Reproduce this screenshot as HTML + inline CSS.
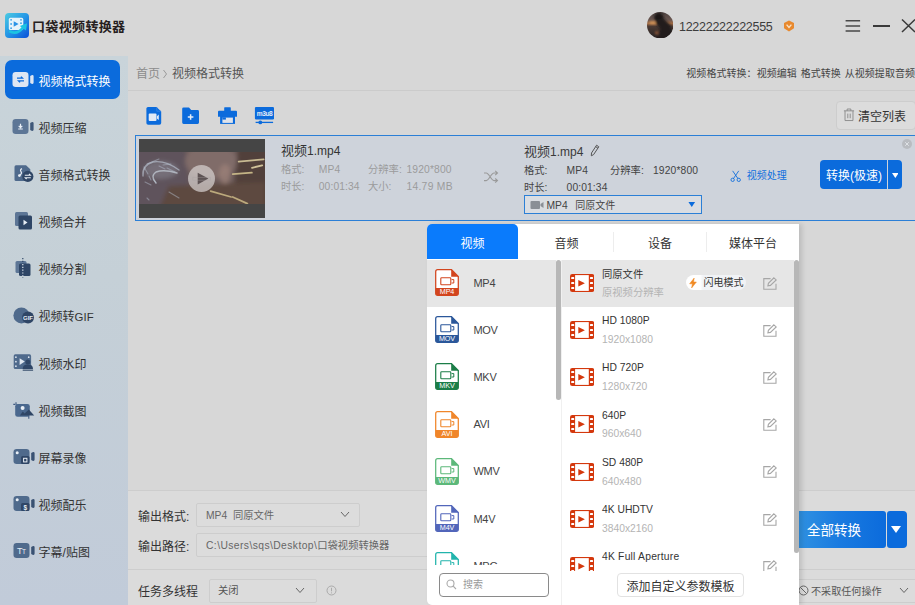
<!DOCTYPE html>
<html lang="zh-CN">
<head>
<meta charset="utf-8">
<title>口袋视频转换器</title>
<style>
*{box-sizing:border-box;margin:0;padding:0}
html,body{width:915px;height:605px;overflow:hidden}
body{position:relative;background:#d7d7d7;font-family:"Liberation Sans","Noto Sans CJK SC",sans-serif;font-size:12px;color:#333}
.abs{position:absolute}
.t{position:absolute;white-space:nowrap;line-height:1}
/* title bar */
#logo{left:4.5px;top:12.8px;width:24.6px;height:25.6px;border-radius:4px;background:linear-gradient(135deg,#4ccbe2 0%,#2496e6 50%,#0a4fd8 100%)}
#title{left:32px;top:19.5px;font-size:13px;font-weight:bold;color:#262020;letter-spacing:.35px}
/* sidebar */
#side{left:0;top:56px;width:128px;height:549px;background:linear-gradient(180deg,#c9d4da 0%,#c5d0d7 40%,#c1cbd9 100%)}
.nav{position:absolute;left:0;width:128px;height:47px}
.nav .ic{position:absolute;left:12px;top:13px;width:22px;height:20px}
.nav .lb{position:absolute;left:38.6px;top:19px;font-size:12px;line-height:1;color:#333;white-space:nowrap}
#act{left:5px;top:60px;width:115px;height:39px;border-radius:7px;background:#0b6bdc}
/* footer */
.box{position:absolute;border:1px solid #cdcdcd;background:#dcdcdc;border-radius:2px}
.hl{position:absolute;height:1px;background:#cdcdcd}
/*POP*/
#pop{position:absolute;left:427px;top:224px;width:372px;height:381px;background:#fff;border-radius:5px 0 0 5px;box-shadow:3px 0 5px rgba(0,0,0,.13)}
.tab{position:absolute;top:0;height:35px;line-height:41px;text-align:center;font-size:12px;color:#333}
.tab.on{background:#0a7bfc;color:#fff;border-radius:5px 5px 0 0}
.sep{position:absolute;top:8px;width:1px;height:20px;background:#ededed}
#ll{position:absolute;left:0;top:36px;width:129px;height:305px;overflow:hidden}
#rl{position:absolute;left:135px;top:36px;width:232px;height:311px;overflow:hidden}
.li,.ri{position:absolute;left:0;width:100%;height:47.2px}
.sel{background:#e6e6e6}
.fi{position:absolute;left:8px;top:9px}
.ln{position:absolute;left:46.5px;top:17.5px;font-size:11px;letter-spacing:-.3px;line-height:1;color:#444}
.fm{position:absolute;left:7.9px;top:13.9px}
.r1{position:absolute;left:40px;top:9px;font-size:10.3px;line-height:1;color:#333;white-space:nowrap}
.r2{position:absolute;left:40px;top:27.8px;font-size:10.3px;line-height:1;color:#b4b4b4;white-space:nowrap}
.ed{position:absolute;left:201px;top:16.6px}
.pill{position:absolute;left:124px;top:15px;width:60px;height:15px;border-radius:8px;background:linear-gradient(90deg,#fff 0,#fff 14px,#f1f3f6 17px)}
.pill span{position:absolute;left:17.5px;top:2.5px;font-size:10px;line-height:1;color:#333;white-space:nowrap}
.sb{position:absolute;border-radius:2.5px;background:#b7b7b7}
/*/POP*/</style>
</head>
<body>

<!-- TITLE BAR -->
<div id="logo" class="abs">
<svg width="25" height="26" viewBox="0 0 25 26" style="position:absolute;left:0;top:0"><rect x="3.8" y="4.8" width="14.5" height="12.2" rx="1.6" fill="#e6f3fa"/><g fill="#3aa2e6"><circle cx="6.1" cy="6.8" r=".9"/><circle cx="6.1" cy="11" r=".9"/><circle cx="6.1" cy="15.2" r=".9"/><circle cx="16" cy="6.8" r=".9"/><circle cx="16" cy="10.2" r=".9"/></g><path d="M8.7 8.2L13.6 11L8.7 13.8Z" fill="#2b93e6"/><path d="M4.3 18.2Q12 22.5 18 14.5" stroke="#1cc4e2" stroke-width="2.6" fill="none"/><path d="M14.8 12.9L22 10.2L21 17.6Z" fill="#1cc4e2"/></svg>
</div>
<div id="title" class="t">口袋视频转换器</div>

<svg class="abs" id="avatar" style="left:647px;top:12px" width="26.4" height="26.4" viewBox="0 0 26 26"><defs><clipPath id="av"><circle cx="13" cy="13" r="13"/></clipPath><linearGradient id="avg" x1="0" y1="0" x2="0" y2="1"><stop offset="0" stop-color="#4a403f"/><stop offset=".3" stop-color="#6a5650"/><stop offset=".43" stop-color="#a06a44"/><stop offset=".55" stop-color="#4a3a34"/><stop offset="1" stop-color="#262121"/></linearGradient><filter id="avb"><feGaussianBlur stdDeviation=".8"/></filter></defs><g clip-path="url(#av)"><rect width="26" height="26" fill="url(#avg)"/><g filter="url(#avb)"><ellipse cx="6" cy="10.6" rx="4" ry="1.3" fill="#d89a5a"/><circle cx="9.5" cy="20.5" r="1.6" fill="#9a5c38"/><circle cx="11.6" cy="5.4" r="4.6" fill="#1c1919"/><path d="M8 8L16 6L23 13L27 27H11L13 16L9 12Z" fill="#211d1d"/></g></g></svg>
<div class="t" style="left:679px;top:20.5px;font-size:12.5px;color:#3c3c3c;letter-spacing:-.27px">12222222222555</div>
<svg class="abs" style="left:783px;top:20px" width="12" height="12" viewBox="0 0 12 12"><path d="M6 .5 L11 3 V8.2 L6 11.5 L1 8.2 V3Z" fill="#e8892e"/><path d="M3.6 4.6 L6 7.4 L8.4 4.6" stroke="#f9e3c8" stroke-width="1.4" fill="none"/></svg>
<svg class="abs" style="left:844px;top:18px" width="17" height="15" viewBox="0 0 17 15"><path d="M1.6 2.8H16.1M1.6 8H16.1M1.6 13.1H16.1" stroke="#484848" stroke-width="1.5"/></svg>
<div class="abs" style="left:873px;top:25px;width:17px;height:1.7px;background:#3a3a3a"></div>
<svg class="abs" style="left:901px;top:18px" width="14" height="15" viewBox="0 0 14 15"><path d="M1 1.5 L14 14 M14 1.5 L1 14" stroke="#3a3a3a" stroke-width="1.5"/></svg>

<!-- SIDEBAR -->
<div id="side" class="abs"></div>
<div id="act" class="abs"></div>
<div id="navs">
<div class="nav" style="top:57px"><svg class="ic" style="left:12.1px;overflow:visible" viewBox="0 0 22 20"><g><rect x="0.5" y="2" width="16" height="15" rx="3.2" fill="#dde6f3"/><path d="M18.2 5.9 Q21.6 3.9 21.6 6.4 V12.6 Q21.6 15.1 18.2 13.1Z" fill="#dde6f3"/><path d="M5 8.2H10.5L9 6.6M12 10.8H6.5L8 12.4" stroke="#0b6bdc" stroke-width="1.3" fill="none"/></g></svg><span class="lb" style="color:#fff">视频格式转换</span></div>
<div class="nav" style="top:104px"><svg class="ic" style="left:12.1px;overflow:visible" viewBox="0 0 22 20"><g><rect x="0.5" y="2" width="16" height="15" rx="3.2" fill="#5d7696"/><path d="M18.2 5.9 Q21.6 3.9 21.6 6.4 V12.6 Q21.6 15.1 18.2 13.1Z" fill="#40597a"/><path d="M8.5 6.8V10M6.7 8.8L8.5 10.6L10.3 8.8M6.2 12H10.8" stroke="#e8eef5" stroke-width="1.2" fill="none"/></g></svg><span class="lb" style="color:#333">视频压缩</span></div>
<div class="nav" style="top:151px"><svg class="ic" style="left:12.5px;overflow:visible" viewBox="0 0 22 20"><g transform="translate(1,1)"><path d="M2 .3H12L16.3 4.2V16H2Q.5 16 .5 14.5V1.8Q.5 .3 2 .3Z" fill="#4f6a8c"/><path d="M8 3.6 Q5.6 4.6 7 6.6 T5.6 10" stroke="#e8eef5" stroke-width="1.2" fill="none"/><circle cx="5.4" cy="10.6" r="1.4" fill="#e8eef5"/><circle cx="13.8" cy="11.4" r="5.6" fill="#2f4666"/><path d="M10.8 10.2H16.3L15 8.9M16.8 12.7H11.3L12.6 14" stroke="#e8eef5" stroke-width="1.1" fill="none"/></g></svg><span class="lb" style="color:#333">音频格式转换</span></div>
<div class="nav" style="top:198px"><svg class="ic" style="left:12.5px;overflow:visible" viewBox="0 0 22 20"><g><rect x="2" y="1" width="13" height="14" rx="1.5" fill="#5d7696"/><rect x="5.5" y="4.5" width="13.5" height="14" rx="1.5" fill="#2f4666"/><path d="M10.5 8.8L14.5 11.5L10.5 14.2Z" fill="#e8eef5"/></g></svg><span class="lb" style="color:#333">视频合并</span></div>
<div class="nav" style="top:245px"><svg class="ic" style="left:12.5px;overflow:visible" viewBox="0 0 22 20"><g><rect x="2.5" y="3" width="11" height="12" rx="1.5" fill="#5d7696"/><rect x="6" y="5.5" width="11.5" height="12.5" rx="1.5" fill="#2f4666"/><path d="M9.8 0V20" stroke="#2f4666" stroke-width="1.2" stroke-dasharray="1.2 1.6"/><path d="M9.8 6V18" stroke="#dfe7f0" stroke-width="1.2" stroke-dasharray="1.2 1.6"/></g></svg><span class="lb" style="color:#333">视频分割</span></div>
<div class="nav" style="top:292px"><svg class="ic" style="left:12.5px;overflow:visible" viewBox="0 0 22 20"><g><circle cx="8.4" cy="10.4" r="8" fill="#4f6a8c"/><circle cx="15" cy="12.5" r="6" fill="#2f4666"/><text x="15" y="14.7" font-size="6" font-weight="bold" fill="#e8eef5" text-anchor="middle" font-family="Liberation Sans,sans-serif">GIF</text></g></svg><span class="lb" style="color:#333">视频转<span style="font-size:11.4px">GIF</span></span></div>
<div class="nav" style="top:340px"><svg class="ic" style="left:12.5px;overflow:visible" viewBox="0 0 22 20"><g><rect x=".7" y="1.3" width="17.4" height="14.8" rx="1.6" fill="#4f6a8c"/><g fill="#dfe7f0"><circle cx="2.9" cy="4.2" r=".85"/><circle cx="2.9" cy="8.7" r=".85"/><circle cx="2.9" cy="13.2" r=".85"/><circle cx="15.7" cy="4.2" r=".85"/></g><path d="M6.6 5.2L11.8 8.6L6.6 12Z" fill="#dfe7f0"/><circle cx="14.8" cy="8.9" r="2.5" fill="#2f4666"/><path d="M9.7 15.9Q9.7 11.6 14.8 11.6Q20 11.6 20 15.9Z" fill="#2f4666"/><rect x="9.7" y="16.6" width="10.4" height="1.1" fill="#2f4666"/></g></svg><span class="lb" style="color:#333">视频水印</span></div>
<div class="nav" style="top:387px"><svg class="ic" style="left:12.5px;overflow:visible" viewBox="0 0 22 20"><g><path d="M3 2.2V5M.3 4.4H2" stroke="#3f5a80" stroke-width="1.1" fill="none"/><rect x="2.2" y="3.9" width="14.6" height="12.9" rx="2.4" fill="#4a688e"/><path d="M15.8 16V18.8" stroke="#3f5a80" stroke-width="1.1"/><circle cx="9.6" cy="8" r="2" fill="#e8eef5"/><path d="M6.9 15.6L9.8 11.6L11.6 13.6L15.8 9.4L21.2 15.6Z" fill="#2f4666"/></g></svg><span class="lb" style="color:#333">视频截图</span></div>
<div class="nav" style="top:434px"><svg class="ic" style="left:13px;overflow:visible" viewBox="0 0 22 20"><g><rect x="0.5" y="2" width="16" height="15" rx="3.2" fill="#4f6a8c"/><path d="M18.2 5.9 Q21.6 3.9 21.6 6.4 V12.6 Q21.6 15.1 18.2 13.1Z" fill="#3a5273"/><circle cx="4.2" cy="5.8" r="1.5" fill="#e8eef5"/><rect x="8" y="9" width="8.5" height="8" rx="1.5" fill="#2f4666"/><rect x="10.6" y="11.3" width="3.3" height="3.6" fill="none" stroke="#e8eef5" stroke-width="1"/></g></svg><span class="lb" style="color:#333">屏幕录像</span></div>
<div class="nav" style="top:481px"><svg class="ic" style="left:13px;overflow:visible" viewBox="0 0 22 20"><g><rect x="0.5" y="2" width="16" height="15" rx="3.2" fill="#4f6a8c"/><path d="M18.2 5.9 Q21.6 3.9 21.6 6.4 V12.6 Q21.6 15.1 18.2 13.1Z" fill="#3a5273"/><circle cx="4.2" cy="5.8" r="1.5" fill="#e8eef5"/><rect x="8" y="9" width="8.5" height="8" rx="1.5" fill="#2f4666"/><text x="12.3" y="15.6" font-size="6.5" font-weight="bold" fill="#e8eef5" text-anchor="middle" font-family="Liberation Sans,sans-serif">$</text></g></svg><span class="lb" style="color:#333">视频配乐</span></div>
<div class="nav" style="top:528px"><svg class="ic" style="left:13px;overflow:visible" viewBox="0 0 22 20"><g><rect x="0.5" y="2" width="16" height="15" rx="3.2" fill="#4f6a8c"/><path d="M18.2 5.9 Q21.6 3.9 21.6 6.4 V12.6 Q21.6 15.1 18.2 13.1Z" fill="#3a5273"/><text x="8.3" y="13" font-size="9" fill="#e8eef5" text-anchor="middle" font-family="Liberation Sans,sans-serif" letter-spacing="-.5">T<tspan font-size="6.5">T</tspan></text></g></svg><span class="lb" style="color:#333">字幕/贴图</span></div>
</div><!--/navs-->

<!-- MAIN -->
<div id="main">
<!-- breadcrumb -->
<div class="t" style="left:136px;top:68px;font-size:12px;color:#8c8c8c">首页</div>
<svg class="abs" style="left:162px;top:69px" width="6" height="10" viewBox="0 0 6 10"><path d="M1.5 1L4.5 5L1.5 9" stroke="#9a9a9a" stroke-width="1" fill="none"/></svg>
<div class="t" style="left:172px;top:68px;font-size:12px;color:#555">视频格式转换</div>
<div class="t" style="left:686.3px;top:69px;font-size:10px;color:#444;word-spacing:1px;letter-spacing:.05px">视频格式转换：视频编辑 格式转换 从视频提取音频</div>
<div class="hl" style="left:128px;top:90px;width:787px;background:#cbcbcb"></div>

<!-- toolbar icons -->
<svg class="abs" style="left:145px;top:106px" width="18" height="20" viewBox="0 0 18 20"><path d="M3 1H11.5L16.2 5.5V17Q16.2 18.8 14.4 18.8H3.2Q1.4 18.8 1.4 17V2.6Q1.4 1 3 1Z" fill="#0b6bdc"/><path d="M11.8 1.2V5.2H16" stroke="#3f8ae6" stroke-width=".7" fill="none"/><rect x="3.7" y="7.6" width="7.8" height="7.4" rx="1" fill="#e1e9f5"/><path d="M11.9 10.2L13.8 8.6V14L11.9 12.4Z" fill="#e1e9f5"/></svg>
<svg class="abs" style="left:181px;top:106px" width="19" height="20" viewBox="0 0 19 20"><path d="M1.2 2.8Q1.2 1.4 2.6 1.4H8L10.2 4H16.6Q18 4 18 5.4V16.6Q18 18 16.6 18H2.6Q1.2 18 1.2 16.6Z" fill="#0b6bdc"/><path d="M9.6 8.2V13.8M6.8 11H12.4" stroke="#e4ecf7" stroke-width="1.5"/></svg>
<svg class="abs" style="left:217px;top:106px" width="21" height="20" viewBox="0 0 21 20"><rect x="7.2" y="1.2" width="6.6" height="4.5" rx=".6" fill="#0b6bdc"/><path d="M2 4.7H19Q20 4.7 20 5.7V10.8H1V5.7Q1 4.7 2 4.7Z" fill="#0b6bdc"/><path d="M3.1 10H18V17.9H3.1Z" fill="#0b6bdc"/><rect x="5.4" y="11.6" width="10.5" height="5.3" fill="#dfe3ea"/><rect x="5.4" y="11.4" width="3.5" height="2.2" fill="#0b6bdc"/></svg>
<svg class="abs" style="left:254px;top:106px" width="21" height="20" viewBox="0 0 21 20"><rect x=".9" y=".9" width="19.1" height="12.6" rx="1.2" fill="#0b6bdc"/><text x="10.5" y="9.6" font-size="6.6" font-weight="bold" fill="#e4ecf7" text-anchor="middle" font-family="Liberation Sans,sans-serif" letter-spacing="-.4">m3u8</text><path d="M1.6 16.4H19.1" stroke="#0b6bdc" stroke-width="1.3"/><circle cx="6.3" cy="16.4" r="1.9" fill="#0b6bdc"/></svg>

<!-- clear list button -->
<div class="abs" style="left:836px;top:101px;width:80px;height:29px;border:1px solid #cdcdcd;border-radius:4px;background:#dcdcdc"></div>
<svg class="abs" style="left:842.5px;top:108px" width="12" height="14" viewBox="0 0 13 15"><path d="M1 3H12M4.5 3V1H8.5V3M2.2 3V13.5H10.8V3M5.2 6V11M7.8 6V11" stroke="#8a8a8a" stroke-width="1" fill="none"/></svg>
<div class="t" style="left:858px;top:111px;font-size:12px;color:#333">清空列表</div>

<!-- list item -->
<div class="abs" style="left:135px;top:135px;width:782px;height:86px;border:1px solid #2b7fd6;background:#ced3db"></div>
<div class="abs" id="thumb" style="left:138.5px;top:139px;width:126px;height:78.5px;background:#454545;overflow:hidden">
<svg class="abs" style="left:0;top:13px" width="126" height="52" viewBox="0 0 126 52">
<defs><filter id="b1" x="-10%" y="-10%" width="120%" height="120%"><feGaussianBlur stdDeviation="2.2"/></filter><filter id="b2" x="-10%" y="-30%" width="120%" height="160%"><feGaussianBlur stdDeviation=".55"/></filter><clipPath id="cp"><rect width="126" height="52"/></clipPath></defs>
<g clip-path="url(#cp)">
<rect width="126" height="52" fill="#6a5958"/>
<g filter="url(#b1)">
<path d="M-5 -5H46L50 30L40 57H-5Z" fill="#5f535b"/>
<ellipse cx="72" cy="9" rx="26" ry="18" fill="#806c69"/>
<path d="M99 -5H131V57H80L96 30Z" fill="#51413a"/>
<path d="M30 34L126 30V57H20Z" fill="#5d493f"/>
<ellipse cx="22" cy="18" rx="17" ry="9" fill="#7b7580" opacity=".8"/>
<ellipse cx="86" cy="22" rx="6" ry="10" fill="#9a8078" opacity=".8"/>
</g>
<g filter="url(#b2)" fill="none" stroke-linecap="round">
<path d="M4 24Q3 13 14 10Q26 8 40 18" stroke="#c9d6e4" stroke-width="1.4" opacity=".55"/>
<path d="M17 31Q11 24 17 20Q25 17 38 21" stroke="#d4dee8" stroke-width="1.4" opacity=".62"/>
<path d="M8 12L20 7M6 30L12 33M24 13L32 12M14 27L17 31M5 15L9 22M20 14L26 17M28 16L36 20M10 24L12 28M30 40L40 46M8 46L10 48" stroke="#b9c4d2" stroke-width="1.1" opacity=".45"/>
<path d="M99.6 9.6L124.7 7.4" stroke="#c8ba92" stroke-width="1.6"/>
<path d="M113 15.8L123.2 13.3" stroke="#d0c29a" stroke-width="1.8"/>
<path d="M93.7 22.1L112.9 20.7" stroke="#c4b486" stroke-width="1.7"/>
<path d="M71.6 39.1L92.2 45" stroke="#bba97c" stroke-width="1.7"/>
<path d="M93.7 45L108.4 51.6" stroke="#bba97c" stroke-width="1.7"/>
</g></g></svg>
 <div class="abs" style="left:49.3px;top:25.6px;width:27.2px;height:27.2px;border-radius:50%;background:rgba(214,208,207,.72)"></div>
 <svg class="abs" style="left:49.3px;top:25.6px" width="27.2" height="27.2" viewBox="0 0 28 28"><path d="M10 8L21 14L10 20Z" fill="#5e5354"/><rect x="5" y="12.6" width="18" height="3" fill="none" stroke="#a9a2a2" stroke-width=".5" opacity=".7"/></svg>
</div>
<div class="t" style="left:281px;top:144px;font-size:13px;color:#333">视频<span style="font-size:12px">1.mp4</span></div>
<div class="t" style="left:281px;top:165px;font-size:10.3px;color:#9b9b9b">格式:</div>
<div class="t" style="left:318.8px;top:165px;font-size:10.3px;color:#9b9b9b;letter-spacing:.1px">MP4</div>
<div class="t" style="left:368px;top:165px;font-size:10.3px;color:#9b9b9b">分辨率:</div>
<div class="t" style="left:406.4px;top:165px;font-size:10.3px;color:#9b9b9b;letter-spacing:.15px">1920*800</div>
<div class="t" style="left:281px;top:182px;font-size:10.3px;color:#9b9b9b">时长:</div>
<div class="t" style="left:318.8px;top:182px;font-size:10.3px;color:#9b9b9b;letter-spacing:.1px">00:01:34</div>
<div class="t" style="left:368px;top:182px;font-size:10.3px;color:#9b9b9b">大小:</div>
<div class="t" style="left:406.4px;top:182px;font-size:10.3px;color:#9b9b9b;letter-spacing:.3px">14.79 MB</div>
<svg class="abs" style="left:483px;top:169.5px" width="16" height="14" viewBox="0 0 16 14"><path d="M1 3H3.2C6.2 3 8 10.6 11 10.6H14M1 10.6H3.2C6.2 10.6 8 3 11 3H14M12.2 .9L14.5 3L12.2 5.1M12.2 8.5L14.5 10.6L12.2 12.7" stroke="#9a9a9a" stroke-width="1.1" fill="none"/></svg>

<div class="t" style="left:524px;top:144.7px;font-size:13px;color:#3a3a3a">视频<span style="font-size:12px">1.mp4</span></div>
<svg class="abs" style="left:590px;top:143.5px" width="10" height="13" viewBox="0 0 10 13"><path d="M6.6 1.2L8.8 2.8L3.6 10.6L1.3 11.8L1.5 9Z M5.7 2.6L7.9 4.2" stroke="#555" stroke-width="1" fill="none"/></svg>
<div class="t" style="left:524px;top:165.5px;font-size:10.3px;color:#444">格式:</div>
<div class="t" style="left:566.6px;top:165.5px;font-size:10.3px;color:#444;letter-spacing:.1px">MP4</div>
<div class="t" style="left:610px;top:165.5px;font-size:10.3px;color:#444">分辨率:</div>
<div class="t" style="left:652.9px;top:165.5px;font-size:10.3px;color:#444;letter-spacing:.15px">1920*800</div>
<div class="t" style="left:524px;top:182.5px;font-size:10.3px;color:#444">时长:</div>
<div class="t" style="left:566.6px;top:182.5px;font-size:10.3px;color:#444;letter-spacing:.1px">00:01:34</div>
<div class="abs" style="left:524px;top:195px;width:177.5px;height:19px;border:1px solid #2b7fd6;background:#dadde2"></div>
<svg class="abs" style="left:529.5px;top:199.5px" width="14" height="10" viewBox="0 0 14 10"><rect x="0.5" y="1" width="9.5" height="8" rx="1" fill="#8a8f96"/><path d="M10.5 4L13.5 2V8L10.5 6Z" fill="#8a8f96"/></svg>
<div class="t" style="left:546.5px;top:200.7px;font-size:10.3px;color:#444">MP4</div>
<div class="t" style="left:575.3px;top:200.7px;font-size:10px;color:#444">同原文件</div>
<svg class="abs" style="left:688px;top:202px" width="7.5" height="5" viewBox="0 0 8 6"><path d="M0 0H8L4 6Z" fill="#0b6bdc"/></svg>

<svg class="abs" style="left:730px;top:169.6px" width="11.4" height="12.2" viewBox="0 0 13 14"><path d="M3 1L9.2 10M10 1L3.8 10" stroke="#0b6bdc" stroke-width="1" fill="none"/><circle cx="3" cy="11.3" r="1.9" stroke="#0b6bdc" stroke-width="1" fill="none"/><circle cx="10" cy="11.3" r="1.9" stroke="#0b6bdc" stroke-width="1" fill="none"/></svg>
<div class="t" style="left:746.8px;top:171.2px;font-size:10px;color:#0f6fde">视频处理</div>
<div class="abs" style="left:820px;top:160px;width:67px;height:29px;border-radius:4px 0 0 4px;background:#0b6bdc"></div>
<div class="t" style="left:826px;top:170px;font-size:12px;color:#fff">转换(极速)</div>
<div class="abs" style="left:888px;top:160px;width:14px;height:29px;border-radius:0 4px 4px 0;background:#0b6bdc"></div>
<svg class="abs" style="left:891.6px;top:172.5px" width="6.6" height="5" viewBox="0 0 8 6"><path d="M0 0H8L4 6Z" fill="#fff"/></svg>
<div class="abs" style="left:902px;top:139px;width:10px;height:10px;border-radius:50%;background:#b9bcc1"></div>
<svg class="abs" style="left:902px;top:139px" width="10" height="10" viewBox="0 0 10 10"><path d="M3.2 3.2L6.8 6.8M6.8 3.2L3.2 6.8" stroke="#dfe2e6" stroke-width="1"/></svg>

<!-- footer -->
<div class="abs" style="left:128px;top:491px;width:787px;height:114px;background:#dbdbdb"></div>
<div class="hl" style="left:128px;top:490px;width:787px"></div>
<div class="t" style="left:138px;top:510.7px;font-size:12px;color:#333">输出格式:</div>
<div class="box" style="left:196px;top:503px;width:164px;height:24px"></div>
<div class="t" style="left:206px;top:511px;font-size:10.3px;color:#666">MP4&nbsp;&nbsp;同原文件</div>
<svg class="abs" style="left:340px;top:511px" width="10" height="7" viewBox="0 0 10 7"><path d="M1 1L5 5.5L9 1" stroke="#666" stroke-width="1" fill="none"/></svg>
<div class="t" style="left:138px;top:540.7px;font-size:12px;color:#333">输出路径:</div>
<div class="box" style="left:196px;top:533px;width:400px;height:24px"></div>
<div class="t" style="left:206px;top:541px;font-size:10.3px;color:#666"><span style="letter-spacing:.42px">C:\Users\sqs\Desktop\</span>口袋视频转换器</div>
<div class="hl" style="left:128px;top:569px;width:787px"></div>
<div class="t" style="left:138px;top:585.7px;font-size:12px;color:#333">任务多线程</div>
<div class="box" style="left:209px;top:579px;width:108px;height:24px"></div>
<div class="t" style="left:218px;top:586px;font-size:10.3px;color:#555">关闭</div>
<svg class="abs" style="left:295px;top:587px" width="10" height="7" viewBox="0 0 10 7"><path d="M1 1L5 5.5L9 1" stroke="#666" stroke-width="1" fill="none"/></svg>
<svg class="abs" style="left:326px;top:585px" width="11" height="11" viewBox="0 0 11 11"><circle cx="5.5" cy="5.5" r="4.5" stroke="#aaa" stroke-width="1" fill="none"/><path d="M5.5 2.8V6.3M5.5 7.4V8.4" stroke="#aaa" stroke-width="1"/></svg>

<div class="abs" style="left:790px;top:511px;width:96px;height:37px;border-radius:4px 3px 3px 4px;background:linear-gradient(90deg,#3496e2 0%,#1a7be0 50%,#0b6bdc 100%)"></div>
<div class="t" style="left:807px;top:523.5px;font-size:13.5px;color:#fff">全部转换</div>
<div class="abs" style="left:887px;top:511px;width:20px;height:37px;border-radius:3px 4px 4px 3px;background:#0b6bdc"></div>
<svg class="abs" style="left:891px;top:526px" width="10" height="7" viewBox="0 0 10 7"><path d="M0 0H10L5 7Z" fill="#fff"/></svg>
<div class="box" style="left:780px;top:579px;width:140px;height:24px"></div>
<svg class="abs" style="left:798px;top:585px" width="11" height="11" viewBox="0 0 11 11"><circle cx="5.5" cy="5.5" r="4.5" stroke="#666" stroke-width="1" fill="none"/><path d="M2.3 2.3L8.7 8.7" stroke="#666" stroke-width="1"/></svg>
<div class="t" style="left:811px;top:587px;font-size:10.1px;color:#555">不采取任何操作</div>
<svg class="abs" style="left:899px;top:587px" width="10" height="7" viewBox="0 0 10 7"><path d="M1 1L5 5.5L9 1" stroke="#666" stroke-width="1" fill="none"/></svg>
</div><!--/main-->

<!-- POPUP -->
<div id="pop">
<div class="tab on" style="left:0;width:91px">视频</div>
<div class="tab" style="left:93px;width:93px">音频</div>
<div class="tab" style="left:186px;width:94px">设备</div>
<div class="tab" style="left:280px;width:92px">媒体平台</div>
<div class="sep" style="left:186px"></div><div class="sep" style="left:279px"></div>
<div id="ll"><div class="li sel" style="top:0.0px"><svg class="fi" width="24" height="27" viewBox="0 0 24 27"><path d="M2.7 .7H16.5L23.3 7.5V24.3Q23.3 26.3 21.3 26.3H2.7Q.7 26.3 .7 24.3V2.7Q.7 .7 2.7 .7Z" fill="#fff" stroke="#d2451e" stroke-width="1.25"/><path d="M16.2 .5L23.5 7.8H16.2Z" fill="#d2451e"/><path d="M.7 19H23.3V24.3Q23.3 26.3 21.3 26.3H2.7Q.7 26.3 .7 24.3Z" fill="#d2451e"/><rect x="5.8" y="8.8" width="10" height="7" rx=".8" fill="none" stroke="#d2451e" stroke-width="1.1"/><path d="M16.6 10.6H18.8V14H16.6" fill="none" stroke="#d2451e" stroke-width="1"/><text x="12" y="25.2" font-size="7.2" fill="#fff" text-anchor="middle" font-family="Liberation Sans,sans-serif" letter-spacing="-.1">MP4</text></svg><span class="ln">MP4</span></div><div class="li" style="top:47.2px"><svg class="fi" width="24" height="27" viewBox="0 0 24 27"><path d="M2.7 .7H16.5L23.3 7.5V24.3Q23.3 26.3 21.3 26.3H2.7Q.7 26.3 .7 24.3V2.7Q.7 .7 2.7 .7Z" fill="#fff" stroke="#2b579a" stroke-width="1.25"/><path d="M16.2 .5L23.5 7.8H16.2Z" fill="#2b579a"/><path d="M.7 19H23.3V24.3Q23.3 26.3 21.3 26.3H2.7Q.7 26.3 .7 24.3Z" fill="#2b579a"/><rect x="5.8" y="8.8" width="10" height="7" rx=".8" fill="none" stroke="#2b579a" stroke-width="1.1"/><path d="M16.6 10.6H18.8V14H16.6" fill="none" stroke="#2b579a" stroke-width="1"/><text x="12" y="25.2" font-size="7.2" fill="#fff" text-anchor="middle" font-family="Liberation Sans,sans-serif" letter-spacing="-.1">MOV</text></svg><span class="ln">MOV</span></div><div class="li" style="top:94.4px"><svg class="fi" width="24" height="27" viewBox="0 0 24 27"><path d="M2.7 .7H16.5L23.3 7.5V24.3Q23.3 26.3 21.3 26.3H2.7Q.7 26.3 .7 24.3V2.7Q.7 .7 2.7 .7Z" fill="#fff" stroke="#1b7d47" stroke-width="1.25"/><path d="M16.2 .5L23.5 7.8H16.2Z" fill="#1b7d47"/><path d="M.7 19H23.3V24.3Q23.3 26.3 21.3 26.3H2.7Q.7 26.3 .7 24.3Z" fill="#1b7d47"/><rect x="5.8" y="8.8" width="10" height="7" rx=".8" fill="none" stroke="#1b7d47" stroke-width="1.1"/><path d="M16.6 10.6H18.8V14H16.6" fill="none" stroke="#1b7d47" stroke-width="1"/><text x="12" y="25.2" font-size="7.2" fill="#fff" text-anchor="middle" font-family="Liberation Sans,sans-serif" letter-spacing="-.1">MKV</text></svg><span class="ln">MKV</span></div><div class="li" style="top:141.6px"><svg class="fi" width="24" height="27" viewBox="0 0 24 27"><path d="M2.7 .7H16.5L23.3 7.5V24.3Q23.3 26.3 21.3 26.3H2.7Q.7 26.3 .7 24.3V2.7Q.7 .7 2.7 .7Z" fill="#fff" stroke="#f0862a" stroke-width="1.25"/><path d="M16.2 .5L23.5 7.8H16.2Z" fill="#f0862a"/><path d="M.7 19H23.3V24.3Q23.3 26.3 21.3 26.3H2.7Q.7 26.3 .7 24.3Z" fill="#f0862a"/><rect x="5.8" y="8.8" width="10" height="7" rx=".8" fill="none" stroke="#f0862a" stroke-width="1.1"/><path d="M16.6 10.6H18.8V14H16.6" fill="none" stroke="#f0862a" stroke-width="1"/><text x="12" y="25.2" font-size="7.2" fill="#fff" text-anchor="middle" font-family="Liberation Sans,sans-serif" letter-spacing="-.1">AVI</text></svg><span class="ln">AVI</span></div><div class="li" style="top:188.8px"><svg class="fi" width="24" height="27" viewBox="0 0 24 27"><path d="M2.7 .7H16.5L23.3 7.5V24.3Q23.3 26.3 21.3 26.3H2.7Q.7 26.3 .7 24.3V2.7Q.7 .7 2.7 .7Z" fill="#fff" stroke="#5cb87a" stroke-width="1.25"/><path d="M16.2 .5L23.5 7.8H16.2Z" fill="#5cb87a"/><path d="M.7 19H23.3V24.3Q23.3 26.3 21.3 26.3H2.7Q.7 26.3 .7 24.3Z" fill="#5cb87a"/><rect x="5.8" y="8.8" width="10" height="7" rx=".8" fill="none" stroke="#5cb87a" stroke-width="1.1"/><path d="M16.6 10.6H18.8V14H16.6" fill="none" stroke="#5cb87a" stroke-width="1"/><text x="12" y="25.2" font-size="7.2" fill="#fff" text-anchor="middle" font-family="Liberation Sans,sans-serif" letter-spacing="-.1">WMV</text></svg><span class="ln">WMV</span></div><div class="li" style="top:236.0px"><svg class="fi" width="24" height="27" viewBox="0 0 24 27"><path d="M2.7 .7H16.5L23.3 7.5V24.3Q23.3 26.3 21.3 26.3H2.7Q.7 26.3 .7 24.3V2.7Q.7 .7 2.7 .7Z" fill="#fff" stroke="#5266ba" stroke-width="1.25"/><path d="M16.2 .5L23.5 7.8H16.2Z" fill="#5266ba"/><path d="M.7 19H23.3V24.3Q23.3 26.3 21.3 26.3H2.7Q.7 26.3 .7 24.3Z" fill="#5266ba"/><rect x="5.8" y="8.8" width="10" height="7" rx=".8" fill="none" stroke="#5266ba" stroke-width="1.1"/><path d="M16.6 10.6H18.8V14H16.6" fill="none" stroke="#5266ba" stroke-width="1"/><text x="12" y="25.2" font-size="7.2" fill="#fff" text-anchor="middle" font-family="Liberation Sans,sans-serif" letter-spacing="-.1">M4V</text></svg><span class="ln">M4V</span></div><div class="li" style="top:283.2px"><svg class="fi" width="24" height="27" viewBox="0 0 24 27"><path d="M2.7 .7H16.5L23.3 7.5V24.3Q23.3 26.3 21.3 26.3H2.7Q.7 26.3 .7 24.3V2.7Q.7 .7 2.7 .7Z" fill="#fff" stroke="#22b4ac" stroke-width="1.25"/><path d="M16.2 .5L23.5 7.8H16.2Z" fill="#22b4ac"/><path d="M.7 19H23.3V24.3Q23.3 26.3 21.3 26.3H2.7Q.7 26.3 .7 24.3Z" fill="#22b4ac"/><rect x="5.8" y="8.8" width="10" height="7" rx=".8" fill="none" stroke="#22b4ac" stroke-width="1.1"/><path d="M16.6 10.6H18.8V14H16.6" fill="none" stroke="#22b4ac" stroke-width="1"/><text x="12" y="25.2" font-size="7.2" fill="#fff" text-anchor="middle" font-family="Liberation Sans,sans-serif" letter-spacing="-.1">MPG</text></svg><span class="ln">MPG</span></div></div>
<div class="sb" style="left:128.9px;top:36px;width:5.1px;height:140px"></div>
<div class="abs" style="left:134px;top:36px;width:1px;height:345px;background:#f0f0f0"></div>
<div id="rl"><div class="ri sel" style="top:0.0px"><svg class="fm" width="24.3" height="18" viewBox="0 0 24.3 18"><rect x="0" y="0" width="24.3" height="18" rx="2.3" fill="#d4380d"/><rect x="5.1" y="1.1" width="13.7" height="15.8" fill="#fff"/><path d="M8.3 6L14.9 9.3L8.3 12.6Z" fill="#d4380d"/><rect x="1.2" y="3.1" width="3" height="2" rx=".6" fill="#fff"/><rect x="1.2" y="8.1" width="3" height="2" rx=".6" fill="#fff"/><rect x="1.2" y="13.1" width="3" height="2" rx=".6" fill="#fff"/><rect x="20" y="3.1" width="3" height="2" rx=".6" fill="#fff"/><rect x="20" y="8.1" width="3" height="2" rx=".6" fill="#fff"/><rect x="20" y="13.1" width="3" height="2" rx=".6" fill="#fff"/></svg><span class="r1" style="top:9.5px">同原文件</span><span class="r2">原视频分辨率</span><div class="pill"><svg width="8" height="10" viewBox="0 0 8 10" style="position:absolute;left:3px;top:2.5px"><path d="M5.2 0L.6 5.8H3.4L2.6 10L7.4 4H4.6Z" fill="#f08a24" stroke="#f08a24" stroke-width=".5" stroke-linejoin="round"/></svg><span>闪电模式</span></div><svg class="ed" width="14" height="13" viewBox="0 0 14 13"><path d="M7.6 1.6H.8V12.2H13V6.8" fill="none" stroke="#a6a6a6" stroke-width="1.1"/><path d="M10.9 .8L13.2 2.9L7.4 8.4L4.9 8.9L5.4 6.3Z" fill="none" stroke="#a6a6a6" stroke-width="1.1"/></svg></div><div class="ri" style="top:47.2px"><svg class="fm" width="24.3" height="18" viewBox="0 0 24.3 18"><rect x="0" y="0" width="24.3" height="18" rx="2.3" fill="#d4380d"/><rect x="5.1" y="1.1" width="13.7" height="15.8" fill="#fff"/><path d="M8.3 6L14.9 9.3L8.3 12.6Z" fill="#d4380d"/><rect x="1.2" y="3.1" width="3" height="2" rx=".6" fill="#fff"/><rect x="1.2" y="8.1" width="3" height="2" rx=".6" fill="#fff"/><rect x="1.2" y="13.1" width="3" height="2" rx=".6" fill="#fff"/><rect x="20" y="3.1" width="3" height="2" rx=".6" fill="#fff"/><rect x="20" y="8.1" width="3" height="2" rx=".6" fill="#fff"/><rect x="20" y="13.1" width="3" height="2" rx=".6" fill="#fff"/></svg><span class="r1">HD 1080P</span><span class="r2">1920x1080</span><svg class="ed" width="14" height="13" viewBox="0 0 14 13"><path d="M7.6 1.6H.8V12.2H13V6.8" fill="none" stroke="#a6a6a6" stroke-width="1.1"/><path d="M10.9 .8L13.2 2.9L7.4 8.4L4.9 8.9L5.4 6.3Z" fill="none" stroke="#a6a6a6" stroke-width="1.1"/></svg></div><div class="ri" style="top:94.4px"><svg class="fm" width="24.3" height="18" viewBox="0 0 24.3 18"><rect x="0" y="0" width="24.3" height="18" rx="2.3" fill="#d4380d"/><rect x="5.1" y="1.1" width="13.7" height="15.8" fill="#fff"/><path d="M8.3 6L14.9 9.3L8.3 12.6Z" fill="#d4380d"/><rect x="1.2" y="3.1" width="3" height="2" rx=".6" fill="#fff"/><rect x="1.2" y="8.1" width="3" height="2" rx=".6" fill="#fff"/><rect x="1.2" y="13.1" width="3" height="2" rx=".6" fill="#fff"/><rect x="20" y="3.1" width="3" height="2" rx=".6" fill="#fff"/><rect x="20" y="8.1" width="3" height="2" rx=".6" fill="#fff"/><rect x="20" y="13.1" width="3" height="2" rx=".6" fill="#fff"/></svg><span class="r1">HD 720P</span><span class="r2">1280x720</span><svg class="ed" width="14" height="13" viewBox="0 0 14 13"><path d="M7.6 1.6H.8V12.2H13V6.8" fill="none" stroke="#a6a6a6" stroke-width="1.1"/><path d="M10.9 .8L13.2 2.9L7.4 8.4L4.9 8.9L5.4 6.3Z" fill="none" stroke="#a6a6a6" stroke-width="1.1"/></svg></div><div class="ri" style="top:141.6px"><svg class="fm" width="24.3" height="18" viewBox="0 0 24.3 18"><rect x="0" y="0" width="24.3" height="18" rx="2.3" fill="#d4380d"/><rect x="5.1" y="1.1" width="13.7" height="15.8" fill="#fff"/><path d="M8.3 6L14.9 9.3L8.3 12.6Z" fill="#d4380d"/><rect x="1.2" y="3.1" width="3" height="2" rx=".6" fill="#fff"/><rect x="1.2" y="8.1" width="3" height="2" rx=".6" fill="#fff"/><rect x="1.2" y="13.1" width="3" height="2" rx=".6" fill="#fff"/><rect x="20" y="3.1" width="3" height="2" rx=".6" fill="#fff"/><rect x="20" y="8.1" width="3" height="2" rx=".6" fill="#fff"/><rect x="20" y="13.1" width="3" height="2" rx=".6" fill="#fff"/></svg><span class="r1">640P</span><span class="r2">960x640</span><svg class="ed" width="14" height="13" viewBox="0 0 14 13"><path d="M7.6 1.6H.8V12.2H13V6.8" fill="none" stroke="#a6a6a6" stroke-width="1.1"/><path d="M10.9 .8L13.2 2.9L7.4 8.4L4.9 8.9L5.4 6.3Z" fill="none" stroke="#a6a6a6" stroke-width="1.1"/></svg></div><div class="ri" style="top:188.8px"><svg class="fm" width="24.3" height="18" viewBox="0 0 24.3 18"><rect x="0" y="0" width="24.3" height="18" rx="2.3" fill="#d4380d"/><rect x="5.1" y="1.1" width="13.7" height="15.8" fill="#fff"/><path d="M8.3 6L14.9 9.3L8.3 12.6Z" fill="#d4380d"/><rect x="1.2" y="3.1" width="3" height="2" rx=".6" fill="#fff"/><rect x="1.2" y="8.1" width="3" height="2" rx=".6" fill="#fff"/><rect x="1.2" y="13.1" width="3" height="2" rx=".6" fill="#fff"/><rect x="20" y="3.1" width="3" height="2" rx=".6" fill="#fff"/><rect x="20" y="8.1" width="3" height="2" rx=".6" fill="#fff"/><rect x="20" y="13.1" width="3" height="2" rx=".6" fill="#fff"/></svg><span class="r1">SD 480P</span><span class="r2">640x480</span><svg class="ed" width="14" height="13" viewBox="0 0 14 13"><path d="M7.6 1.6H.8V12.2H13V6.8" fill="none" stroke="#a6a6a6" stroke-width="1.1"/><path d="M10.9 .8L13.2 2.9L7.4 8.4L4.9 8.9L5.4 6.3Z" fill="none" stroke="#a6a6a6" stroke-width="1.1"/></svg></div><div class="ri" style="top:236.0px"><svg class="fm" width="24.3" height="18" viewBox="0 0 24.3 18"><rect x="0" y="0" width="24.3" height="18" rx="2.3" fill="#d4380d"/><rect x="5.1" y="1.1" width="13.7" height="15.8" fill="#fff"/><path d="M8.3 6L14.9 9.3L8.3 12.6Z" fill="#d4380d"/><rect x="1.2" y="3.1" width="3" height="2" rx=".6" fill="#fff"/><rect x="1.2" y="8.1" width="3" height="2" rx=".6" fill="#fff"/><rect x="1.2" y="13.1" width="3" height="2" rx=".6" fill="#fff"/><rect x="20" y="3.1" width="3" height="2" rx=".6" fill="#fff"/><rect x="20" y="8.1" width="3" height="2" rx=".6" fill="#fff"/><rect x="20" y="13.1" width="3" height="2" rx=".6" fill="#fff"/></svg><span class="r1">4K UHDTV</span><span class="r2">3840x2160</span><svg class="ed" width="14" height="13" viewBox="0 0 14 13"><path d="M7.6 1.6H.8V12.2H13V6.8" fill="none" stroke="#a6a6a6" stroke-width="1.1"/><path d="M10.9 .8L13.2 2.9L7.4 8.4L4.9 8.9L5.4 6.3Z" fill="none" stroke="#a6a6a6" stroke-width="1.1"/></svg></div><div class="ri" style="top:283.2px"><svg class="fm" width="24.3" height="18" viewBox="0 0 24.3 18"><rect x="0" y="0" width="24.3" height="18" rx="2.3" fill="#d4380d"/><rect x="5.1" y="1.1" width="13.7" height="15.8" fill="#fff"/><path d="M8.3 6L14.9 9.3L8.3 12.6Z" fill="#d4380d"/><rect x="1.2" y="3.1" width="3" height="2" rx=".6" fill="#fff"/><rect x="1.2" y="8.1" width="3" height="2" rx=".6" fill="#fff"/><rect x="1.2" y="13.1" width="3" height="2" rx=".6" fill="#fff"/><rect x="20" y="3.1" width="3" height="2" rx=".6" fill="#fff"/><rect x="20" y="8.1" width="3" height="2" rx=".6" fill="#fff"/><rect x="20" y="13.1" width="3" height="2" rx=".6" fill="#fff"/></svg><span class="r1" style="letter-spacing:.22px">4K Full Aperture</span><span class="r2">4096x3112</span><svg class="ed" width="14" height="13" viewBox="0 0 14 13"><path d="M7.6 1.6H.8V12.2H13V6.8" fill="none" stroke="#a6a6a6" stroke-width="1.1"/><path d="M10.9 .8L13.2 2.9L7.4 8.4L4.9 8.9L5.4 6.3Z" fill="none" stroke="#a6a6a6" stroke-width="1.1"/></svg></div></div>
<div class="sb" style="left:367.2px;top:36px;width:4.8px;height:293px"></div>
<div class="abs" style="left:12px;top:349px;width:110px;height:24px;border:1px solid #8a8a8a;border-radius:4px;background:#fff"></div>
<svg class="abs" style="left:19px;top:355px" width="11" height="11" viewBox="0 0 11 11"><circle cx="4.5" cy="4.5" r="3.5" stroke="#aaa" stroke-width="1.1" fill="none"/><path d="M7.2 7.2L10 10" stroke="#aaa" stroke-width="1.1"/></svg>
<div class="t" style="left:36px;top:356px;font-size:10px;color:#999">搜索</div>
<div class="abs" style="left:190px;top:349px;width:127px;height:24px;border:1px solid #e2e2e2;border-radius:4px;background:#fff;text-align:center;line-height:27px;font-size:12px;color:#333">添加自定义参数模板</div>
</div><!--/pop-->

</body>
</html>
